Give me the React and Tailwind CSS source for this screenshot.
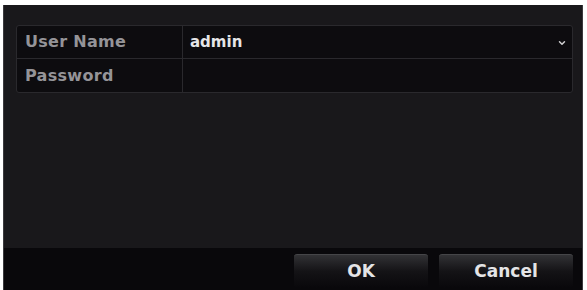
import { ChevronDown } from 'lucide-react'

// Login dialog of a DVR-style UI: credentials table + OK/Cancel bar.
const FONT = { fontFamily: '"DejaVu Sans", "Liberation Sans", sans-serif' }

function Row({ label, children, last }) {
  return (
    <div className={`flex h-[33px] ${last ? '' : 'border-b border-[#2a292d]'}`}>
      <div className="w-[166px] shrink-0 flex items-center pl-[8px] border-r border-[#2a292d] text-[16px] font-bold tracking-[0.3px] text-[#959498]">
        {label}
      </div>
      <div className="flex-1 flex items-center pl-[7px] pr-[5px]">{children}</div>
    </div>
  )
}

export default function App() {
  return (
    <div className="w-[587px] h-[290px] bg-white pt-[5px] pl-[3px] pr-[4px]" style={FONT}>
      <div className="h-full flex flex-col bg-[#19181b] border-x border-[#3b3a3e]">
        {/* Form area */}
        <div className="flex-1 pt-[20px] pl-[12px] pr-[9px]">
          <div className="rounded-[3px] border border-[#2a292d] bg-[#0d0c0f]">
            <Row label="User Name">
              <span className="flex-1 text-[15px] font-bold text-[#e6e6e8]">admin</span>
              <ChevronDown size={10} strokeWidth={3.5} className="text-[#d0d0d2] mt-[2px]" />
            </Row>
            <Row label="Password" last />
          </div>
        </div>

        {/* Button bar */}
        <div className="h-[42px] bg-[#09080b] flex justify-end gap-[11px] pt-[6px] pr-[9px]">
          {['OK', 'Cancel'].map(t => (
            <button
              key={t}
              type="button"
              className="w-[134px] h-[34px] rounded-[3px] border-t border-[#454548] bg-gradient-to-b from-[#323235] via-[#141316] to-[#09080b] text-[17px] font-bold text-[#e4e4e6] flex items-center justify-center pt-[1px]"
            >
              {t}
            </button>
          ))}
        </div>
      </div>
    </div>
  )
}
